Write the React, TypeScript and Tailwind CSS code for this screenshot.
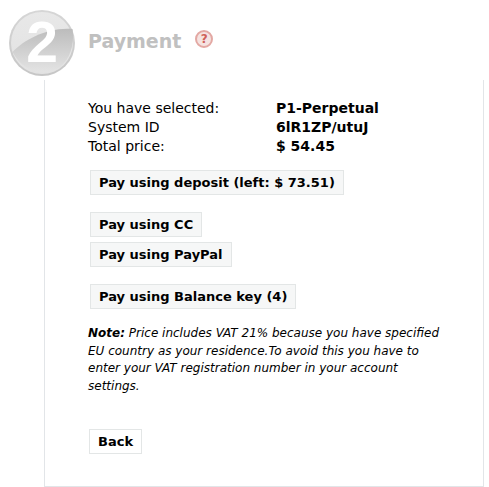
const font = { fontFamily: '"DejaVu Sans", Verdana, sans-serif' };

function StepBadge() {
  return (
    <div className="absolute left-[9px] top-[10px] w-[66px] h-[66px]">
      <svg className="absolute inset-0" width="66" height="66" viewBox="0 0 66 66">
        <defs>
          <linearGradient id="rim" x1="0" y1="0" x2="0" y2="1">
            <stop offset="0" stopColor="#d6d6d6" />
            <stop offset="1" stopColor="#c6c6c6" />
          </linearGradient>
          <linearGradient id="face" x1="0" y1="0" x2="0" y2="1">
            <stop offset="0" stopColor="#e8e8e8" />
            <stop offset="1" stopColor="#e2e2e2" />
          </linearGradient>
          <linearGradient id="band" x1="0" y1="0" x2="0" y2="1">
            <stop offset="0" stopColor="#bcbcbc" />
            <stop offset="1" stopColor="#e4e4e4" />
          </linearGradient>
        </defs>
        <circle cx="33" cy="33" r="33" fill="url(#rim)" />
        <circle cx="33" cy="33" r="31" fill="url(#face)" />
        <path d="M3.500 42C15 30 38 17 63.500 19C66 36 60 52 48 59C32 67 13 60 3.500 42Z" fill="url(#band)" />
      </svg>
      <span
        className="absolute inset-0 flex items-center justify-center pb-[2px] text-white font-bold text-[57px] leading-none"
        style={{ fontFamily: '"Liberation Sans", Arial, sans-serif' }}
      >
        2
      </span>
    </div>
  );
}

function HelpIcon() {
  return (
    <span className="ml-[14px] mt-[1px] flex h-[18px] w-[18px] items-center justify-center rounded-full border-2 border-[#e3a8a3] bg-[#f5e3e1] text-[12px] font-bold leading-none text-[#cf5f58]">
      ?
    </span>
  );
}

function PayButton({ label, className = '' }: { label: string; className?: string }) {
  return (
    <button
      type="button"
      className={`ml-[2px] block h-[25px] border border-[#e3e6e6] bg-[#f6f7f7] px-[8px] text-[13px] font-bold leading-[23px] text-black ${className}`}
    >
      {label}
    </button>
  );
}

export default function App() {
  return (
    <div className="relative w-[489px] h-[487px] bg-white overflow-hidden" style={font}>
      <StepBadge />
      <div className="flex h-[80px] items-start pl-[88px] pt-[29px]">
        <h2 className="text-[19px] font-bold leading-[24px] text-[#c0c0c0]">Payment</h2>
        <HelpIcon />
      </div>
      <div className="ml-[44px] mr-[5px] h-[407px] border-b border-l border-r border-[#e2e5e8] pl-[43px] pt-[19px]">
        <div className="grid grid-cols-[188px_auto] text-[14px] leading-[19px] text-black">
          <span>You have selected:</span>
          <b>P1-Perpetual</b>
          <span>System ID</span>
          <b>6lR1ZP/utuJ</b>
          <span>Total price:</span>
          <b>$ 54.45</b>
        </div>
        <PayButton label="Pay using deposit (left: $ 73.51)" className="mt-[14px]" />
        <PayButton label="Pay using CC" className="mt-[17px]" />
        <PayButton label="Pay using PayPal" className="mt-[5px]" />
        <PayButton label="Pay using Balance key (4)" className="mt-[17px]" />
        <p className="mt-[16px] w-[360px] text-[12px] italic leading-[17.500px] text-black">
          <b>Note:</b> Price includes VAT 21% because you have specified EU country as your residence.To avoid this you have to enter your VAT registration number in your account settings.
        </p>
        <button
          type="button"
          className="ml-[1px] mt-[34px] block h-[25px] border border-[#e3e6e6] bg-white px-[8px] text-[13px] font-bold leading-[23px] text-black"
        >
          Back
        </button>
      </div>
    </div>
  );
}
